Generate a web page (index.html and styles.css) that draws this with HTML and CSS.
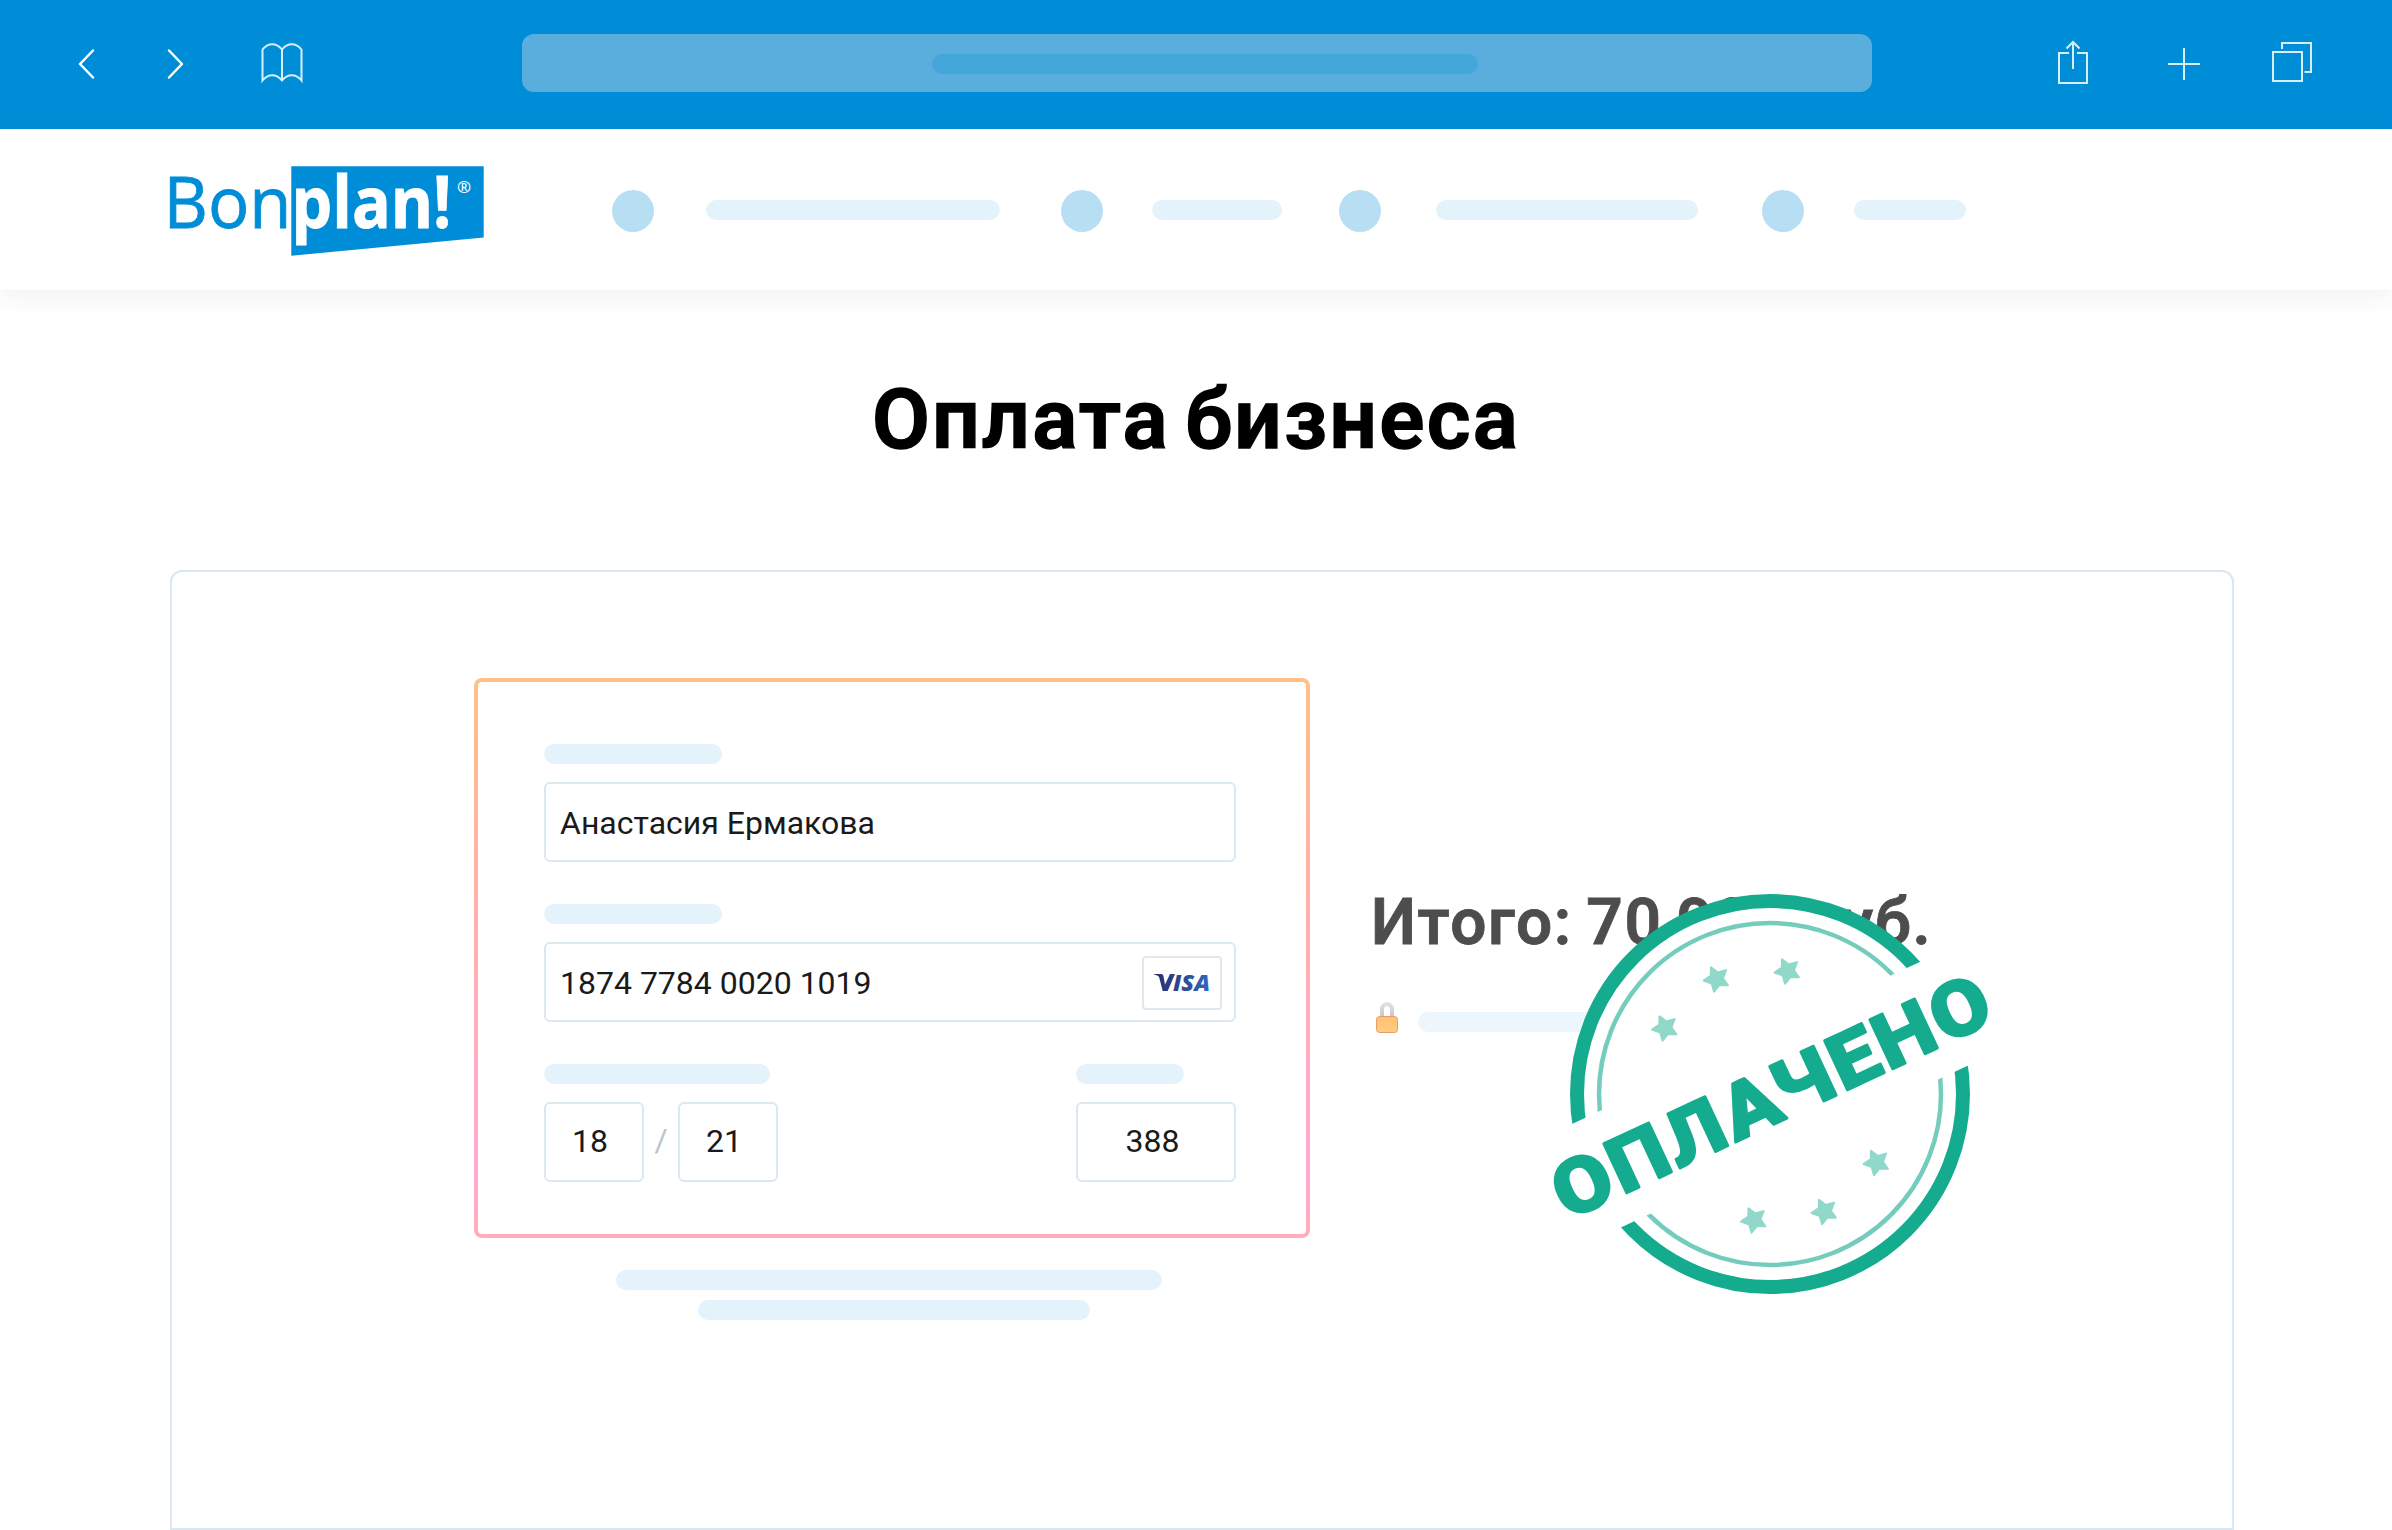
FILE: index.html
```html
<!DOCTYPE html>
<html lang="ru">
<head>
<meta charset="utf-8">
<title>Оплата бизнеса</title>
<link rel="stylesheet" href="styles.css">
</head>
<body>
<header class="browser">
  <div class="browser-left">
    <svg class="chevron" width="20" height="34" viewBox="0 0 20 34"><path d="M17 3.500 4 17 17 30.500"/></svg>
    <svg class="chevron" width="20" height="34" viewBox="0 0 20 34"><path d="M4 3.500 17 17 4 30.500"/></svg>
    <svg class="thin book" width="42" height="42" viewBox="0 0 42 42"><path d="M1.500 7.500C7 .5 15.500 .5 21 7.500 26.500.5 35 .5 40.500 7.500V38.500C35 31.500 26.500 31.500 21 38.500 15.500 31.500 7 31.500 1.500 38.500ZM21 7.500V38.500"/></svg>
  </div>
  <div class="address"><span class="address-line"></span></div>
  <div class="browser-right">
    <svg class="thin" width="32" height="48" viewBox="0 0 32 48"><path d="M12 14H2V44H30V14H20M16 30V3M9.500 9.500 16 3 22.500 9.500"/></svg>
    <svg class="thin" width="32" height="32" viewBox="0 0 32 32"><path d="M16 0V32M0 16H32"/></svg>
    <svg class="thin" width="40" height="40" viewBox="0 0 40 40"><path d="M1 10H30V39H1ZM10 7V1H39V30H32.500"/></svg>
  </div>
</header>

<nav class="nav">
  <svg class="logo" width="314" height="92" viewBox="170 165 314 92">
    <path class="logo-flag" d="M291.300 166.300H483.700V237.500L291.300 255.700Z"/>
    <text class="logo-light" x="163.500" y="228.300" textLength="128" lengthAdjust="spacingAndGlyphs">Bon</text>
    <text class="logo-bold" x="291.500" y="228.300" textLength="160" lengthAdjust="spacingAndGlyphs">plan!</text>
    <text class="logo-mark" x="464" y="192.500" text-anchor="middle">®</text>
  </svg>
  <span class="dot"></span><span class="line line-1"></span>
  <span class="dot dot-2"></span><span class="line line-2"></span>
  <span class="dot dot-3"></span><span class="line line-3"></span>
  <span class="dot dot-4"></span><span class="line line-4"></span>
</nav>

<main>
  <h1 class="title">Оплата бизнеса</h1>
  <section class="panel">
    <div class="payment">
      <form class="card">
        <div class="card-inner">
          <div class="field">
            <span class="label"></span>
            <div class="input">Анастасия Ермакова</div>
          </div>
          <div class="field">
            <span class="label"></span>
            <div class="input"><span>1874 7784 0020 1019</span>
              <span class="visa"><svg width="58" height="22" viewBox="0 0 58 22">
                <defs><linearGradient id="visa" gradientUnits="userSpaceOnUse" x1="2" y1="0" x2="56" y2="0"><stop offset="0" stop-color="#2b2f6e"/><stop offset="1" stop-color="#2f66bd"/></linearGradient></defs>
                <path fill="url(#visa)" d="M1 2H8.300Q10 2 10.400 4L12 12.500 17 2H22L14.700 19H9.700L6.200 5.500Q5.500 3.400 1 2.600Z"/>
                <text class="visa-text" x="20" y="18.500" textLength="37" lengthAdjust="spacingAndGlyphs" fill="url(#visa)">ISA</text>
              </svg></span>
            </div>
          </div>
          <div class="row">
            <div class="field">
              <span class="label label-date"></span>
              <div class="date">
                <div class="input small"><span>18</span></div>
                <span class="slash">/</span>
                <div class="input small"><span>21</span></div>
              </div>
            </div>
            <div class="field">
              <span class="label label-cvv"></span>
              <div class="input cvv"><span>388</span></div>
            </div>
          </div>
        </div>
      </form>
      <span class="note"></span>
      <span class="note note-short"></span>
    </div>
    <div class="summary">
      <div class="total">Итого: 70 000 руб.</div>
      <div class="secure">
        <svg width="26" height="34" viewBox="0 0 26 34">
          <defs>
            <linearGradient id="body" x1="0" y1="0" x2="0" y2="1"><stop offset="0" stop-color="#ffc072"/><stop offset="1" stop-color="#ffcd80"/></linearGradient>
            <linearGradient id="arc" x1="0" y1="0" x2="0" y2="1"><stop offset="0" stop-color="#e0e0e0"/><stop offset="1" stop-color="#c6c6c6"/></linearGradient>
          </defs>
          <path fill="none" stroke="url(#arc)" stroke-width="4" d="M8 17V9.500a5 5.500 0 0 1 10 0V17"/>
          <rect x="2.500" y="16.500" width="21" height="16" rx="3" fill="url(#body)" stroke="#e69c68"/>
        </svg>
        <span class="secure-line"></span>
      </div>
      <svg class="stamp" width="500" height="420" viewBox="-250 -210 500 420">
        <defs>
          <clipPath id="arcs"><path transform="rotate(-25)" d="M-220-220H220V-56.400H-220ZM-220 58H220V220H-220Z"/></clipPath>
          <path id="star" d="M0-13 3.700-5.600 12.400-4 6.200 2 7.600 10.500 0 6.800-7.600 10.500-6.200 2-12.400-4-3.700-5.600Z"/>
        </defs>
        <circle r="199" fill="#fff"/>
        <g clip-path="url(#arcs)">
          <circle class="ring" r="193"/>
          <circle class="ring ring-thin" r="171"/>
        </g>
        <g class="stars">
          <use href="#star" transform="translate(-53.500 -115) rotate(-25)"/>
          <use href="#star" transform="translate(17.500 -123) rotate(-25)"/>
          <use href="#star" transform="translate(-105 -66) rotate(-25)"/>
          <use href="#star" transform="translate(106.500 68.500) rotate(-25)"/>
          <use href="#star" transform="translate(54.500 117.500) rotate(-25)"/>
          <use href="#star" transform="translate(-16 126) rotate(-25)"/>
        </g>
        <text class="stamp-text" transform="rotate(-25)" x="-237" y="29" textLength="477" lengthAdjust="spacingAndGlyphs">ОПЛАЧЕНО</text>
      </svg>
    </div>
  </section>
</main>
</body>
</html>
```
FILE: styles.css
```css
* { box-sizing: border-box; }
body { margin: 0; width: 2392px; height: 1530px; overflow: hidden; background: #fff; font-family: Roboto, "Liberation Sans", sans-serif; color: #1a1a1a; display: flex; flex-direction: column; }
svg { display: block; flex: none; overflow: visible; }

.browser { height: 129px; flex: none; background: #008dd7; display: flex; justify-content: space-between; align-items: flex-start; padding: 34px 80px 0 76px; }
.browser-left { display: flex; align-items: flex-start; width: 446px; padding-top: 13px; }
.chevron { fill: none; stroke: #fff; stroke-width: 2.5; stroke-linecap: round; stroke-linejoin: round; margin-right: 69px; }
.thin { fill: none; stroke: #fff; stroke-opacity: .85; stroke-width: 2; }
.book { margin: -5px 0 0 7px; }
.address { width: 1350px; height: 58px; border-radius: 12px; background: #59aede; display: flex; align-items: flex-start; justify-content: center; padding-top: 20px; }
.address-line { width: 546px; height: 20px; border-radius: 10px; background: #45a6db; margin-left: 16px; }
.browser-right { width: 440px; display: flex; padding-left: 185px; }
.browser-right svg:nth-child(1) { margin-top: 5px; }
.browser-right svg:nth-child(2) { margin: 14px 72px 0 79px; }
.browser-right svg:nth-child(3) { margin-top: 8px; }

.nav { height: 161px; flex: none; padding: 36px 0 0 170px; display: flex; align-items: flex-start; box-shadow: 0 6px 24px rgba(50, 60, 100, .07); }
.logo-flag { fill: #008dd7; }
.logo text { font-family: "Open Sans", "Noto Sans", sans-serif; font-size: 72px; }
.logo .logo-light { fill: #008dd7; stroke: #008dd7; stroke-width: .8; }
.logo .logo-bold { fill: #fff; font-weight: 700; stroke: #fff; stroke-width: .8; }
.logo .logo-mark { fill: #fff; font-size: 17px; font-weight: 600; }
.dot { width: 42px; height: 42px; border-radius: 50%; background: #b8def3; margin: 25px 0 0 128px; flex: none; }
.line { height: 20px; border-radius: 10px; background: #e4f3fb; margin: 35px 0 0 52px; flex: none; }
.line-1 { width: 294px; }
.line-2 { width: 130px; margin-left: 49px; }
.line-3 { width: 262px; margin-left: 55px; }
.line-4 { width: 112px; margin-left: 50px; }
.dot-2 { margin-left: 61px; }
.dot-3 { margin-left: 57px; }
.dot-4 { margin-left: 64px; }

main { display: flex; flex-direction: column; align-items: center; }
.title { margin: 81px 0 0; height: 199px; line-height: 98px; font-size: 84px; font-weight: 600; letter-spacing: 2.200px; word-spacing: -8px; color: #000; -webkit-text-stroke: 1.4px #000; white-space: nowrap; }
.panel { width: 2064px; height: 960px; margin-left: 12px; border: 2px solid #d9e8f1; border-radius: 12px 12px 0 0; padding: 106px 0 0 302px; display: flex; gap: 64px; }
.payment { width: 836px; display: flex; flex-direction: column; align-items: flex-start; }
.card { width: 836px; height: 560px; flex: none; margin: 0 0 32px; padding: 4px; border-radius: 8px; background: linear-gradient(#ffc085, #ffb0ac 42%, #ffaad4 88%, #ffadb8 99%); }
.card-inner { height: 552px; border-radius: 4px; background: #fff; padding: 62px 70px 0 66px; display: flex; flex-direction: column; gap: 42px; }
.field { display: flex; flex-direction: column; gap: 18px; }
.label { width: 178px; height: 20px; border-radius: 10px; background: #e4f3fb; }
.label-date { width: 226px; }
.label-cvv { width: 108px; }
.input { height: 80px; border: 2px solid #dbe8f0; border-radius: 6px; display: flex; align-items: center; justify-content: space-between; padding: 2px 12px 0 14px; font-size: 32px; white-space: nowrap; }
.visa { width: 80px; height: 54px; border: 2px solid #e0e8ee; border-radius: 4px; display: flex; align-items: center; justify-content: center; }
.visa-text { font: italic 800 23px "Open Sans", sans-serif; }
.row { display: flex; justify-content: space-between; }
.date { display: flex; }
.small { width: 100px; padding: 0 8px 3px 0; justify-content: center; }
.cvv { width: 160px; padding: 0 7px 3px 0; justify-content: center; }
.slash { width: 34px; text-align: center; font-size: 32px; line-height: 76px; color: #b8c6cc; }
.note { width: 546px; height: 20px; border-radius: 10px; background: #e4f3fb; margin-left: 142px; }
.note-short { width: 392px; margin: 10px 0 0 224px; }

.summary { position: relative; width: 660px; padding-top: 207px; }
.total { margin-left: -3px; font-size: 64px; line-height: 76px; font-weight: 600; letter-spacing: 1.600px; word-spacing: -4px; color: #4d4d4d; -webkit-text-stroke: .8px #4d4d4d; white-space: nowrap; }
.secure { display: flex; align-items: flex-start; gap: 18px; margin-top: 39px; }
.secure-line { width: 330px; height: 20px; border-radius: 10px; background: #edf6fd; margin-top: 12px; }
.stamp { position: absolute; left: 146px; top: 206px; }
.ring { fill: none; stroke: #15ab8f; stroke-width: 14; }
.ring-thin { stroke: #74cdbc; stroke-width: 4.5; }
.stars { fill: #90d8ca; stroke: #90d8ca; stroke-width: 2; stroke-linejoin: round; }
.stamp-text { font-size: 76px; font-weight: 800; letter-spacing: 3px; fill: #15ab8f; stroke: #15ab8f; stroke-width: 3; stroke-linejoin: round; }
```
